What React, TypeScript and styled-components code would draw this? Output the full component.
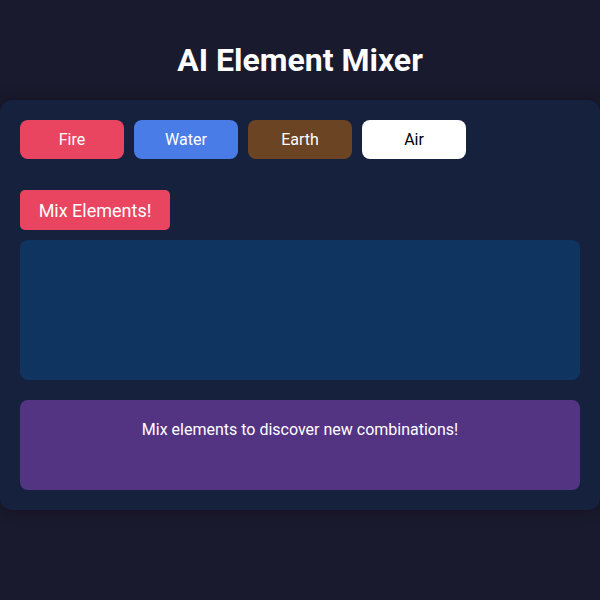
import React from "react";
import styled, { createGlobalStyle } from "styled-components";

const Global = createGlobalStyle`
  html, body { margin: 0; padding: 0; background: #1a1a2e; }
  body { font-family: Roboto, "Noto Sans", sans-serif; color: #fff; }
`;

const Page = styled.div`
  min-height: 600px;
  background: #1a1a2e;
  display: flex;
  flex-direction: column;
`;

const Title = styled.h1`
  margin: 0;
  height: 100px;
  display: flex;
  align-items: center;
  justify-content: center;
  padding-top: 20px;
  box-sizing: border-box;
  font-size: 32px;
  font-weight: 700;
  color: #fff;
`;

const Panel = styled.div`
  background: #16213e;
  border-radius: 12px;
  padding: 20px;
  box-shadow: 0 0 15px rgba(0, 0, 0, 0.35);
  display: flex;
  flex-direction: column;
`;

const Row = styled.div`
  display: flex;
  gap: 10px;
  margin-bottom: 31px;
`;

const ElementButton = styled.button<{ $bg: string; $fg: string }>`
  width: 104px;
  height: 39px;
  border: none;
  border-radius: 8px;
  background: ${(p) => p.$bg};
  color: ${(p) => p.$fg};
  font-family: Roboto, "Noto Sans", sans-serif;
  font-size: 16px;
  padding: 0;
  margin: 0;
`;

const MixButton = styled.button`
  align-self: flex-start;
  width: 150px;
  height: 40px;
  border: none;
  border-radius: 5px;
  background: #e94560;
  color: #fff;
  font-family: Roboto, "Noto Sans", sans-serif;
  font-size: 18px;
  padding: 0;
  margin: 0 0 10px 0;
`;

const MixArea = styled.div`
  height: 140px;
  background: #0f3460;
  border-radius: 8px;
  margin-bottom: 20px;
`;

const Result = styled.div`
  height: 90px;
  box-sizing: border-box;
  background: #533483;
  border-radius: 8px;
  padding: 20px;
  text-align: center;
  font-size: 16px;
  line-height: 20px;
  color: #fff;
`;

const elements = [
  { name: "Fire", bg: "#e94560", fg: "#fff" },
  { name: "Water", bg: "#4a7ce8", fg: "#fff" },
  { name: "Earth", bg: "#6b4423", fg: "#fff" },
  { name: "Air", bg: "#ffffff", fg: "#000" },
];

export default function App() {
  return (
    <Page>
      <Global />
      <Title>AI Element Mixer</Title>
      <Panel>
        <Row>
          {elements.map((e) => (
            <ElementButton key={e.name} $bg={e.bg} $fg={e.fg}>
              {e.name}
            </ElementButton>
          ))}
        </Row>
        <MixButton>Mix Elements!</MixButton>
        <MixArea />
        <Result>Mix elements to discover new combinations!</Result>
      </Panel>
    </Page>
  );
}
